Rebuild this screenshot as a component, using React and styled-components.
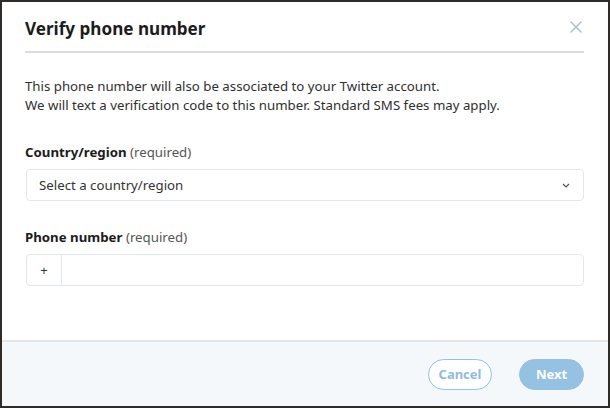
import React from "react";
import styled, { createGlobalStyle } from "styled-components";

const GlobalStyle = createGlobalStyle`
  html, body {
    margin: 0;
    padding: 0;
    background: #fff;
  }
  body {
    font-family: "Noto Sans", "Open Sans", Arial, sans-serif;
    color: #14171a;
  }
`;

const Frame = styled.div`
  box-sizing: border-box;
  width: 610px;
  height: 408px;
  border: 2px solid #2e2b29;
  display: flex;
  flex-direction: column;
  background: #fff;
`;

const Header = styled.div`
  display: flex;
  align-items: flex-start;
  justify-content: space-between;
  margin: 0 24px 0 23px;
  padding: 14px 0 9px;
  border-bottom: 2px solid #dcdcdc;
`;

const Title = styled.h1`
  margin: 0;
  font-size: 17.1px;
  line-height: 26px;
  font-weight: 700;
  color: #1c1c1c;
`;

const CloseButton = styled.button`
  border: 0;
  background: none;
  padding: 0;
  margin: 4px 1px 0 0;
  width: 14px;
  height: 14px;
  display: flex;
  align-items: center;
  justify-content: center;
  cursor: pointer;
`;

const Body = styled.div`
  flex: 1;
  padding: 0 24px 0 23px;
`;

const Intro = styled.p`
  margin: 24px 0 0;
  font-size: 13.25px;
  line-height: 19px;
  color: #2f2f2f;
`;

const Label = styled.div`
  margin: ${props => props.spaceTop}px 0 7px;
  font-size: 13.25px;
  line-height: 19px;
  color: #1c1c1c;

  strong {
    font-weight: 700;
  }

  span {
    color: #555;
  }
`;

const Field = styled.div`
  box-sizing: border-box;
  height: 32px;
  margin-left: 1px;
  border: 1px solid #e1e8ed;
  border-radius: 4px;
  display: flex;
  align-items: stretch;
  background: #fff;
`;

const SelectText = styled.div`
  flex: 1;
  display: flex;
  align-items: center;
  padding-left: 12px;
  font-size: 13.25px;
  color: #333;
`;

const Chevron = styled.div`
  width: 34px;
  display: flex;
  align-items: center;
  justify-content: center;
`;

const Prefix = styled.div`
  width: 34px;
  border-right: 1px solid #e1e8ed;
  display: flex;
  align-items: center;
  justify-content: center;
  font-size: 13px;
  color: #333;
`;

const PhoneInput = styled.input`
  flex: 1;
  border: 0;
  outline: none;
  background: transparent;
  padding: 0 10px;
  font: inherit;
`;

const Footer = styled.div`
  height: 64px;
  border-top: 2px solid #e1e6ea;
  background: #f5f8fa;
  display: flex;
  align-items: center;
  justify-content: flex-end;
  gap: 27px;
  padding-right: 24px;
`;

const PillButton = styled.button`
  box-sizing: border-box;
  height: 31px;
  min-width: ${props => props.width}px;
  border-radius: 16px;
  font-family: "Noto Sans", Arial, sans-serif;
  font-size: 13px;
  font-weight: 700;
  cursor: pointer;
  border: 1px solid ${props => (props.primary ? "#95c1e3" : "#93c1e6")};
  background: ${props => (props.primary ? "#95c1e3" : "#fff")};
  color: ${props => (props.primary ? "#fff" : "#8fbbdf")};
`;

const App = () => (
  <>
    <GlobalStyle />
    <Frame>
      <Header>
        <Title>Verify phone number</Title>
        <CloseButton aria-label="Close">
          <svg width="12" height="12" viewBox="0 0 12 12">
            <path
              d="M1 1L11 11M11 1L1 11"
              stroke="#a9bccb"
              strokeWidth="1.4"
              strokeLinecap="round"
            />
          </svg>
        </CloseButton>
      </Header>
      <Body>
        <Intro>
          This phone number will also be associated to your Twitter account.
          <br />
          We will text a verification code to this number. Standard SMS fees
          may apply.
        </Intro>
        <Label spaceTop={28}>
          <strong>Country/region</strong> <span>(required)</span>
        </Label>
        <Field>
          <SelectText>Select a country/region</SelectText>
          <Chevron>
            <svg width="8" height="5" viewBox="0 0 8 5">
              <path
                d="M1 1L4 4L7 1"
                stroke="#555"
                strokeWidth="1.2"
                fill="none"
              />
            </svg>
          </Chevron>
        </Field>
        <Label spaceTop={27}>
          <strong>Phone number</strong> <span>(required)</span>
        </Label>
        <Field>
          <Prefix>+</Prefix>
          <PhoneInput type="tel" />
        </Field>
      </Body>
      <Footer>
        <PillButton width={64}>Cancel</PillButton>
        <PillButton primary width={65}>
          Next
        </PillButton>
      </Footer>
    </Frame>
  </>
);

export default App;
